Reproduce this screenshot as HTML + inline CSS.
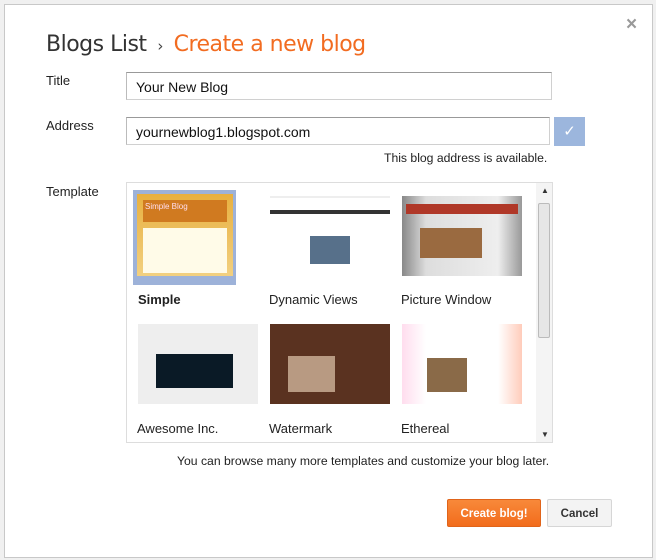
<!DOCTYPE html><html><head><style>
body{margin:0;width:656px;height:560px;background:#f0f0f0;font-family:"Liberation Sans",Arial,sans-serif;position:relative;overflow:hidden}
.dlg{position:absolute;left:4px;top:4px;width:647px;height:552px;background:#fff;border:1px solid #c8c8c8}
.a{position:absolute}
.lbl{font-size:13px;color:#222}
.inp{position:absolute;left:126px;width:424px;height:28px;border:1px solid #d0d0d0;border-top-color:#999;border-left-color:#bbb;font-size:14px;line-height:28px;padding-left:9px;box-sizing:border-box;color:#111}
.th{position:absolute;width:120px;height:80px}
.cap{position:absolute;font-size:13px;color:#222}
</style></head><body>
<div class="dlg"></div>
<div class="a" style="left:626px;top:14px;font-size:19px;color:#999;font-weight:bold">×</div>
<div class="a" style="left:46px;top:32px;font-size:22px;color:#333;font-family:'DejaVu Sans','Liberation Sans',sans-serif;letter-spacing:-0.5px">Blogs List <span style="font-size:15px;color:#444">&nbsp;›&nbsp;</span> <span style="color:#f26c21">Create a new blog</span></div>
<div class="a lbl" style="left:46px;top:73px">Title</div>
<div class="inp" style="top:72px;width:426px">Your New Blog</div>
<div class="a lbl" style="left:46px;top:118px">Address</div>
<div class="inp" style="top:117px">yournewblog1.blogspot.com</div>
<div class="a" style="left:554px;top:117px;width:31px;height:29px;background:#9cb6dd;color:#fff;text-align:center;line-height:29px;font-size:15px">✓</div>
<div class="a" style="left:384px;top:151px;font-size:12.2px;color:#222">This blog address is available.</div>
<div class="a lbl" style="left:46px;top:184px">Template</div>
<div class="a" style="left:126px;top:182px;width:427px;height:261px;border:1px solid #ddd;box-sizing:border-box"></div>
<div class="a" style="left:536px;top:183px;width:16px;height:259px;background:#f4f4f4"></div>
<div class="a" style="left:538px;top:203px;width:12px;height:135px;background:#e6e6e6;border:1px solid #bbb;box-sizing:border-box;border-radius:2px"></div>
<div class="a" style="left:541px;top:186px;font-size:8px;color:#333">▲</div>
<div class="a" style="left:541px;top:430px;font-size:8px;color:#333">▼</div>
<div class="a" style="left:133px;top:190px;width:103px;height:95px;background:#9db2d9"></div>
<div class="th" style="left:137px;top:194px;width:96px;height:82px;background:linear-gradient(#e8b040,#f2d080)"><div style="margin:6px 6px;height:18px;background:#d07a20;color:#fde;font-size:8px;padding:2px">Simple Blog</div><div style="margin:6px 6px 0;height:45px;background:#fffbe8"></div></div>
<div class="th" style="left:270px;top:196px;background:#fff;border-top:2px solid #eee"><div style="margin-top:12px;height:4px;background:#333"></div><div style="margin:22px 40px 0;height:28px;background:#57708a"></div></div>
<div class="th" style="left:402px;top:196px;background:linear-gradient(90deg,#888,#ddd 20%,#eee 80%,#999)"><div style="margin:8px 4px;height:10px;background:#b03828"></div><div style="margin:14px 40px 0 18px;height:30px;background:#9a6a40"></div></div>
<div class="th" style="left:138px;top:324px;background:#eee"><div style="margin:30px 25px 0 18px;height:34px;background:#0a1a26"></div></div>
<div class="th" style="left:270px;top:324px;background:#5a3220"><div style="margin:32px 55px 0 18px;height:36px;background:#b89a82"></div></div>
<div class="th" style="left:402px;top:324px;background:linear-gradient(90deg,#fde,#fff 20%,#fff 80%,#fcb)"><div style="margin:34px 55px 0 25px;height:34px;background:#8a6a48"></div></div>
<div class="cap" style="left:138px;top:292px;font-weight:bold">Simple</div>
<div class="cap" style="left:269px;top:292px">Dynamic Views</div>
<div class="cap" style="left:401px;top:292px">Picture Window</div>
<div class="cap" style="left:137px;top:421px">Awesome Inc.</div>
<div class="cap" style="left:269px;top:421px">Watermark</div>
<div class="cap" style="left:401px;top:421px">Ethereal</div>
<div class="a" style="left:177px;top:454px;font-size:12.2px;color:#222">You can browse many more templates and customize your blog later.</div>
<div class="a" style="left:447px;top:499px;width:94px;height:28px;background:linear-gradient(#f8893a,#f26c1c);border:1px solid #e0641a;box-sizing:border-box;border-radius:2px;color:#fff;font-size:11.5px;font-weight:bold;text-align:center;line-height:28px">Create blog!</div>
<div class="a" style="left:547px;top:499px;width:65px;height:28px;background:#f3f3f3;border:1px solid #d6d6d6;box-sizing:border-box;border-radius:2px;color:#333;font-size:11.5px;font-weight:bold;text-align:center;line-height:28px">Cancel</div>
</body></html>
